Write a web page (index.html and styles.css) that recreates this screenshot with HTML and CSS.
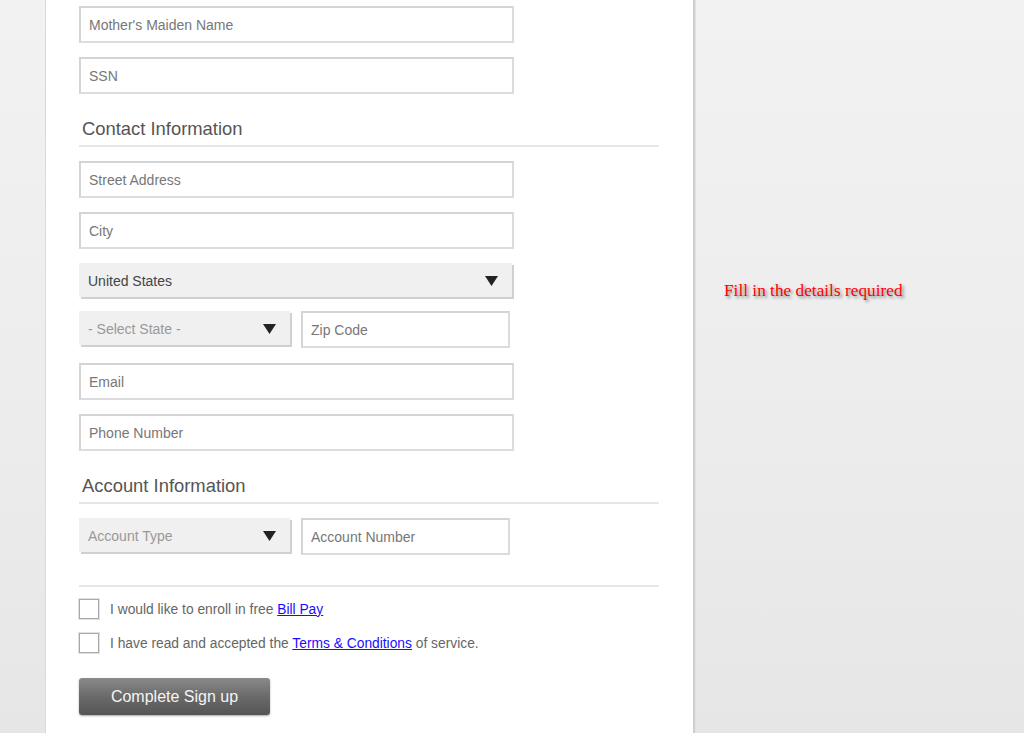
FILE: index.html
```html
<!DOCTYPE html>
<html>
<head>
<meta charset="utf-8">
<link rel="stylesheet" href="styles.css">
</head>
<body>
<div class="page">
  <div class="panel">
    <form class="form">
      <input class="field" type="text" placeholder="Mother's Maiden Name">
      <input class="field" type="text" placeholder="SSN">

      <h2 class="section">Contact Information</h2>
      <input class="field" type="text" placeholder="Street Address">
      <input class="field" type="text" placeholder="City">
      <div class="select wide">
        <span class="select-text">United States</span>
        <svg class="arrow" width="13" height="10" viewBox="0 0 13 10"><path d="M0 0H13L6.5 10Z" fill="#222"/></svg>
      </div>
      <div class="row">
        <div class="select half">
          <span class="select-text muted">- Select State -</span>
          <svg class="arrow" width="13" height="10" viewBox="0 0 13 10"><path d="M0 0H13L6.5 10Z" fill="#222"/></svg>
        </div>
        <input class="field small" type="text" placeholder="Zip Code">
      </div>
      <input class="field" type="text" placeholder="Email">
      <input class="field" type="text" placeholder="Phone Number">

      <h2 class="section">Account Information</h2>
      <div class="row">
        <div class="select half">
          <span class="select-text muted">Account Type</span>
          <svg class="arrow" width="13" height="10" viewBox="0 0 13 10"><path d="M0 0H13L6.5 10Z" fill="#222"/></svg>
        </div>
        <input class="field small" type="text" placeholder="Account Number">
      </div>

      <div class="divider"></div>

      <label class="check"><span class="box"></span><span>I would like to enroll in free <a href="#">Bill Pay</a></span></label>
      <label class="check"><span class="box"></span><span>I have read and accepted the <a href="#">Terms &amp; Conditions</a> of service.</span></label>

      <button class="submit" type="button">Complete Sign up</button>
    </form>
  </div>
  <div class="aside">
    <p class="hint">Fill in the details required</p>
  </div>
</div>
</body>
</html>
```

FILE: styles.css
```css
html, body {
  margin: 0;
  padding: 0;
}
body {
  height: 733px;
  overflow: hidden;
  background: linear-gradient(to bottom, #f2f2f2 0%, #ececec 60%, #e6e6e6 100%);
  font-family: "Liberation Sans", Arial, sans-serif;
}
.page {
  display: flex;
  height: 733px;
  padding-left: 45px;
}
.panel {
  width: 647px;
  background: #fff;
  border-left: 1px solid #dadada;
  border-right: 2px solid #cfcfcf;
  box-shadow: 1px 0 0 #e2e2e2;
  box-sizing: content-box;
}
.form {
  display: flex;
  flex-direction: column;
  align-items: flex-start;
  padding: 6px 0 0 33px;
  width: 580px;
}
.field {
  box-sizing: border-box;
  width: 435px;
  height: 37px;
  margin: 0 0 14px 0;
  padding: 0 0 0 8px;
  border: 2px solid #dcdcdc;
  border-top-color: #d4d4d4;
  border-left-color: #d4d4d4;
  background: #fff;
  font-family: "Liberation Sans", Arial, sans-serif;
  font-size: 14px;
  color: #555;
  outline: none;
}
.field::placeholder {
  color: #777;
  opacity: 1;
}
.field.small {
  width: 209px;
  margin: 0;
}
.section {
  box-sizing: border-box;
  width: 580px;
  margin: 0 0 14px 0;
  padding: 10px 0 5px 3px;
  border-bottom: 2px solid #e6e6e6;
  font-size: 18.4px;
  font-weight: normal;
  line-height: 22px;
  color: #555;
}
.select {
  box-sizing: border-box;
  height: 34px;
  display: flex;
  align-items: center;
  justify-content: space-between;
  padding: 2px 14px 0 9px;
  background: #f0f0f0;
  box-shadow: 2px 2px 0 #d0d0d0;
  font-size: 14px;
  color: #444;
}
.select.wide {
  width: 433px;
  margin-bottom: 14px;
}
.select.half {
  width: 211px;
}
.select-text.muted {
  color: #999;
}
.arrow {
  display: block;
}
.row {
  display: flex;
  align-items: flex-start;
  gap: 11px;
  margin-bottom: 15px;
}
.divider {
  width: 580px;
  height: 2px;
  background: #e6e6e6;
  margin: 15px 0 12px 0;
}
.check {
  display: flex;
  align-items: center;
  gap: 11px;
  font-size: 13.8px;
  color: #666;
  margin-bottom: 14px;
  height: 20px;
}
.box {
  box-sizing: border-box;
  width: 20px;
  height: 20px;
  border: 1px solid #a8a8a8;
  box-shadow: 0 0 0 1px #e2e2e2;
  background: #fff;
}
.check a {
  color: #1a0dff;
  text-decoration: underline;
}
.submit {
  margin-top: 11px;
  width: 191px;
  height: 37px;
  border: none;
  border-radius: 3px;
  background: linear-gradient(to bottom, #8a8a8a 0%, #6a6a6a 50%, #555 100%);
  box-shadow: 0 1px 2px rgba(0,0,0,0.35);
  color: #f4f4f4;
  font-family: "Liberation Sans", Arial, sans-serif;
  font-size: 16px;
  padding: 0;
}
.aside {
  padding: 281px 0 0 29px;
}
.hint {
  margin: 0;
  font-family: "Liberation Serif", "Times New Roman", serif;
  font-size: 17.3px;
  color: #ff0000;
  text-shadow: 2px 2px 3px #888;
}
```
